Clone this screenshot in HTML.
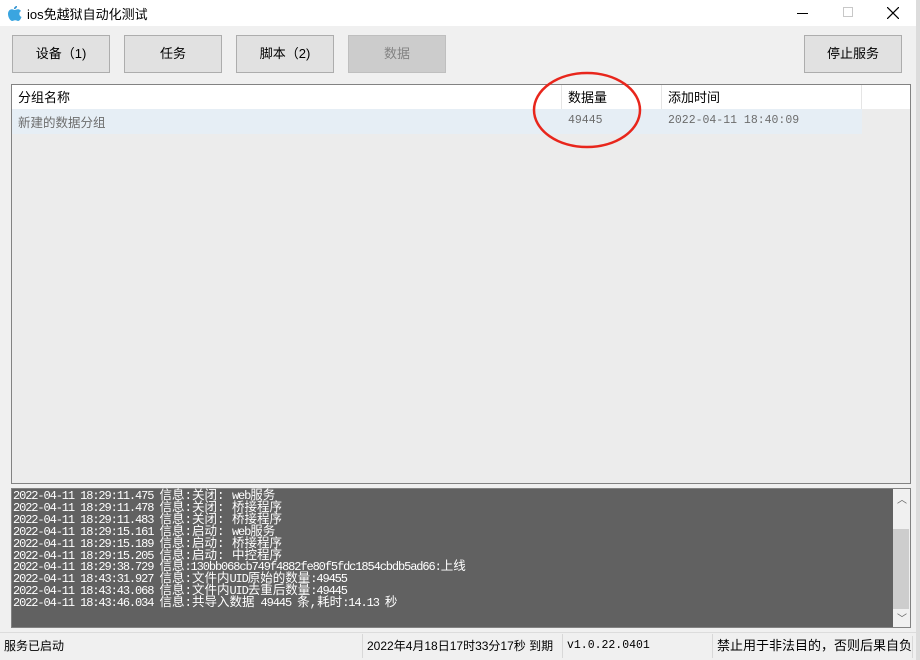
<!DOCTYPE html>
<html><head><meta charset="utf-8"><style>
*{margin:0;padding:0;box-sizing:border-box}
body{width:920px;height:660px;background:#f0f0f0;position:relative;overflow:hidden;font-family:"Liberation Sans","Noto Sans CJK SC",sans-serif;font-size:12px;color:#000}
.a{position:absolute}
.title{left:0;top:0;width:916px;height:26px;background:#fff}
.btn{position:absolute;top:35px;height:38px;background:#e1e1e1;border:1px solid #adadad;text-align:center;line-height:36px;font-size:13px}
.mono{font-family:"Liberation Mono","Noto Sans CJK SC",monospace}
.log{left:11px;top:488px;width:900px;height:140px;background:#616161;border:1px solid #828282;color:#fff;font-family:"Liberation Mono","Noto Sans CJK SC",monospace;font-size:12px;line-height:11.9px;padding:2px 0 0 1px;white-space:pre;letter-spacing:-1.1px}
.log b{font-weight:normal;letter-spacing:0;font-size:12.5px}
.sb{position:absolute;top:634px;height:24px;line-height:24px;font-size:12px;border-left:1px solid #d8d8d8;padding-left:4px}
</style></head><body>
<div class="a" style="left:916px;top:0;width:4px;height:660px;background:#dcdcdc"></div>
<div class="a title"></div>
<svg class="a" style="left:7px;top:5px" width="15" height="17" viewBox="0 0 15 17"><path d="M10 1c0 2-1.5 3-3 3 0-2 1.5-3 3-3z" fill="#2a8fd0"/><path d="M7.5 5c1.5 0 2-.8 3.5-.8 1.2 0 2.3.7 3 1.8-2.5 1.4-2 5 .5 6-.7 2-2 4-3.3 4-1.2 0-1.5-.7-3-.7s-1.9.7-3 .7C3.5 16 1 12.5 1 9c0-2.8 1.8-4.7 3.8-4.7 1.3 0 2 .7 2.7.7z" fill="#3aa5e0"/></svg>
<div class="a" style="left:27px;top:4px;font-size:13px">ios免越狱自动化测试</div>
<div class="a" style="left:797px;top:13px;width:11px;height:1px;background:#000"></div>
<div class="a" style="left:843px;top:7px;width:10px;height:10px;border:1px solid #c8c8c8"></div>
<svg class="a" style="left:887px;top:7px" width="12" height="12"><path d="M0 0L12 12M12 0L0 12" stroke="#000" stroke-width="1.2"/></svg>
<div class="btn" style="left:12px;width:98px">设备（1)</div>
<div class="btn" style="left:124px;width:98px">任务</div>
<div class="btn" style="left:236px;width:98px">脚本（2)</div>
<div class="btn" style="left:348px;width:98px;background:#cccccc;border-color:#bfbfbf;color:#838383">数据</div>
<div class="btn" style="left:804px;width:98px">停止服务</div>
<div class="a" style="left:11px;top:84px;width:900px;height:400px;border:1px solid #828282;background:#ececec"></div>
<div class="a" style="left:12px;top:85px;width:898px;height:24px;background:#fff"></div>
<div class="a" style="left:561px;top:85px;width:1px;height:24px;background:#e5e5e5"></div>
<div class="a" style="left:661px;top:85px;width:1px;height:24px;background:#e5e5e5"></div>
<div class="a" style="left:861px;top:85px;width:1px;height:24px;background:#e5e5e5"></div>
<div class="a" style="left:18px;top:87px;font-size:13px">分组名称</div>
<div class="a" style="left:568px;top:87px;font-size:13px">数据量</div>
<div class="a" style="left:668px;top:87px;font-size:13px">添加时间</div>
<div class="a" style="left:12px;top:109px;width:850px;height:25px;background:#e6eef5"></div>
<div class="a" style="left:18px;top:112px;font-size:12.5px;color:#6d6d6d">新建的数据分组</div>
<div class="a mono" style="left:568px;top:114px;color:#6d6d6d;font-size:11.5px">49445</div>
<div class="a mono" style="left:668px;top:114px;color:#6d6d6d;font-size:11.5px">2022-04-11 18:40:09</div>
<svg class="a" style="left:520px;top:64px" width="140" height="90"><ellipse cx="67" cy="46" rx="53" ry="37" fill="none" stroke="#e8261c" stroke-width="2.5"/></svg>
<div class="a log">2022-04-11 18:29:11.475 <b>信息:关闭: </b>web<b>服务</b>
2022-04-11 18:29:11.478 <b>信息:关闭: 桥接程序</b>
2022-04-11 18:29:11.483 <b>信息:关闭: 桥接程序</b>
2022-04-11 18:29:15.161 <b>信息:启动: </b>web<b>服务</b>
2022-04-11 18:29:15.189 <b>信息:启动: 桥接程序</b>
2022-04-11 18:29:15.205 <b>信息:启动: 中控程序</b>
2022-04-11 18:29:38.729 <b>信息</b>:130bb068cb749f4882fe80f5fdc1854cbdb5ad66:<b>上线</b>
2022-04-11 18:43:31.927 <b>信息:文件内</b>UID<b>原始的数量</b>:49455
2022-04-11 18:43:43.068 <b>信息:文件内</b>UID<b>去重后数量</b>:49445
2022-04-11 18:43:46.034 <b>信息:共导入数据</b> 49445 <b>条,耗时</b>:14.13 <b>秒</b></div>
<div class="a" style="left:893px;top:489px;width:17px;height:138px;background:#f0f0f0"></div>
<div class="a" style="left:893px;top:529px;width:16px;height:80px;background:#cdcdcd"></div>
<div class="a" style="left:897px;top:491px;font-size:10px;color:#606060">︿</div>
<div class="a" style="left:897px;top:610px;font-size:10px;color:#606060">﹀</div>
<div class="a" style="left:0;top:632px;width:916px;height:1px;background:#dcdcdc"></div>
<div class="sb" style="left:0;border:none">服务已启动</div>
<div class="sb" style="left:362px">2022年4月18日17时33分17秒 到期</div>
<div class="sb mono" style="left:562px;font-size:11.5px">v1.0.22.0401</div>
<div class="sb" style="left:712px;font-size:13px">禁止用于非法目的，否则后果自负</div>
<div class="a" style="left:912px;top:636px;width:1px;height:22px;background:#d8d8d8"></div>
</body></html>
